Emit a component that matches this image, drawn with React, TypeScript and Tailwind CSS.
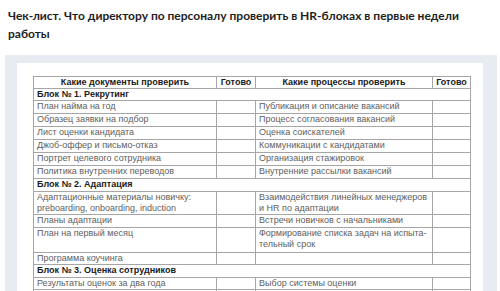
type Row =
  | { kind: "block"; title: string; h: string }
  | { kind: "row"; doc: string[]; proc: string[]; h: string };

const rows: Row[] = [
  { kind: "block", title: "Блок № 1. Рекрутинг", h: "h-[12px]" },
  { kind: "row", doc: ["План найма на год"], proc: ["Публикация и описание вакансий"], h: "h-[13px]" },
  { kind: "row", doc: ["Образец заявки на подбор"], proc: ["Процесс согласования вакансий"], h: "h-[13px]" },
  { kind: "row", doc: ["Лист оценки кандидата"], proc: ["Оценка соискателей"], h: "h-[13px]" },
  { kind: "row", doc: ["Джоб-оффер и письмо-отказ"], proc: ["Коммуникации с кандидатами"], h: "h-[13px]" },
  { kind: "row", doc: ["Портрет целевого сотрудника"], proc: ["Организация стажировок"], h: "h-[13px]" },
  { kind: "row", doc: ["Политика внутренних переводов"], proc: ["Внутренние рассылки вакансий"], h: "h-[13px]" },
  { kind: "block", title: "Блок № 2. Адаптация", h: "h-[13px]" },
  {
    kind: "row",
    doc: ["Адаптационные материалы новичку:", "preboarding, onboarding, induction"],
    proc: ["Взаимодействия линейных менеджеров", "и HR по адаптации"],
    h: "h-[23px]",
  },
  { kind: "row", doc: ["Планы адаптации"], proc: ["Встречи новичков с начальниками"], h: "h-[13px]" },
  {
    kind: "row",
    doc: ["План на первый месяц"],
    proc: ["Формирование списка задач на испыта-", "тельный срок"],
    h: "h-[25px]",
  },
  { kind: "row", doc: ["Программа коучинга"], proc: [], h: "h-[12px]" },
  { kind: "block", title: "Блок № 3. Оценка сотрудников", h: "h-[13px]" },
  { kind: "row", doc: ["Результаты оценок за два года"], proc: ["Выбор системы оценки"], h: "h-[12px]" },
  { kind: "row", doc: [""], proc: [""], h: "h-[13px]" },
];

const cell = "border border-[#a6a6a6] align-top px-[3px] p-0";

const Lines = ({ lines }: { lines: string[] }) => (
  <>
    {lines.map((l, i) => (
      <div key={i} className="leading-[11px]">
        {l || "\u00a0"}
      </div>
    ))}
  </>
);

export default function App() {
  return (
    <div className="w-[500px] h-[291px] overflow-hidden bg-white">
      <div className="h-[55px] pl-[8px] pt-[7px]">
        <h1
          className="whitespace-nowrap text-[12px] leading-[18px] font-bold text-[#1e1e1e]"
          style={{ fontFamily: 'Lato, "Noto Sans", sans-serif' }}
        >
          Чек-лист. Что директору по персоналу проверить в HR-блоках в первые недели
          <br />
          работы
        </h1>
      </div>
      <div className="ml-[5px] w-[492px] h-[300px] bg-[#e6ecf2] pt-[8px] pl-[12px]">
        <div className="w-[466px] h-[300px] bg-white pt-[13px] pl-[16px]">
          <table
            className="border-collapse table-fixed w-[437px] text-[9px] text-[#606060]"
            style={{ fontFamily: '"Liberation Sans", Arial, sans-serif' }}
          >
            <colgroup>
              <col className="w-[183px]" />
              <col className="w-[39px]" />
              <col className="w-[177px]" />
              <col className="w-[38px]" />
            </colgroup>
            <tbody>
              <tr className="h-[12px] font-bold text-[#1a1a1a]">
                <td className={`${cell} text-center leading-[11px]`}>Какие документы проверить</td>
                <td className={`${cell} text-center leading-[11px]`}>Готово</td>
                <td className={`${cell} text-center leading-[11px]`}>Какие процессы проверить</td>
                <td className={`${cell} text-center leading-[11px]`}>Готово</td>
              </tr>
              {rows.map((r, i) =>
                r.kind === "block" ? (
                  <tr key={i} className={r.h}>
                    <td colSpan={4} className={`${cell} font-bold text-[#1a1a1a] leading-[11px]`}>
                      {r.title}
                    </td>
                  </tr>
                ) : (
                  <tr key={i} className={r.h}>
                    <td className={cell}>
                      <Lines lines={r.doc} />
                    </td>
                    <td className={cell}></td>
                    <td className={cell}>
                      <Lines lines={r.proc} />
                    </td>
                    <td className={cell}></td>
                  </tr>
                )
              )}
            </tbody>
          </table>
        </div>
      </div>
    </div>
  );
}
